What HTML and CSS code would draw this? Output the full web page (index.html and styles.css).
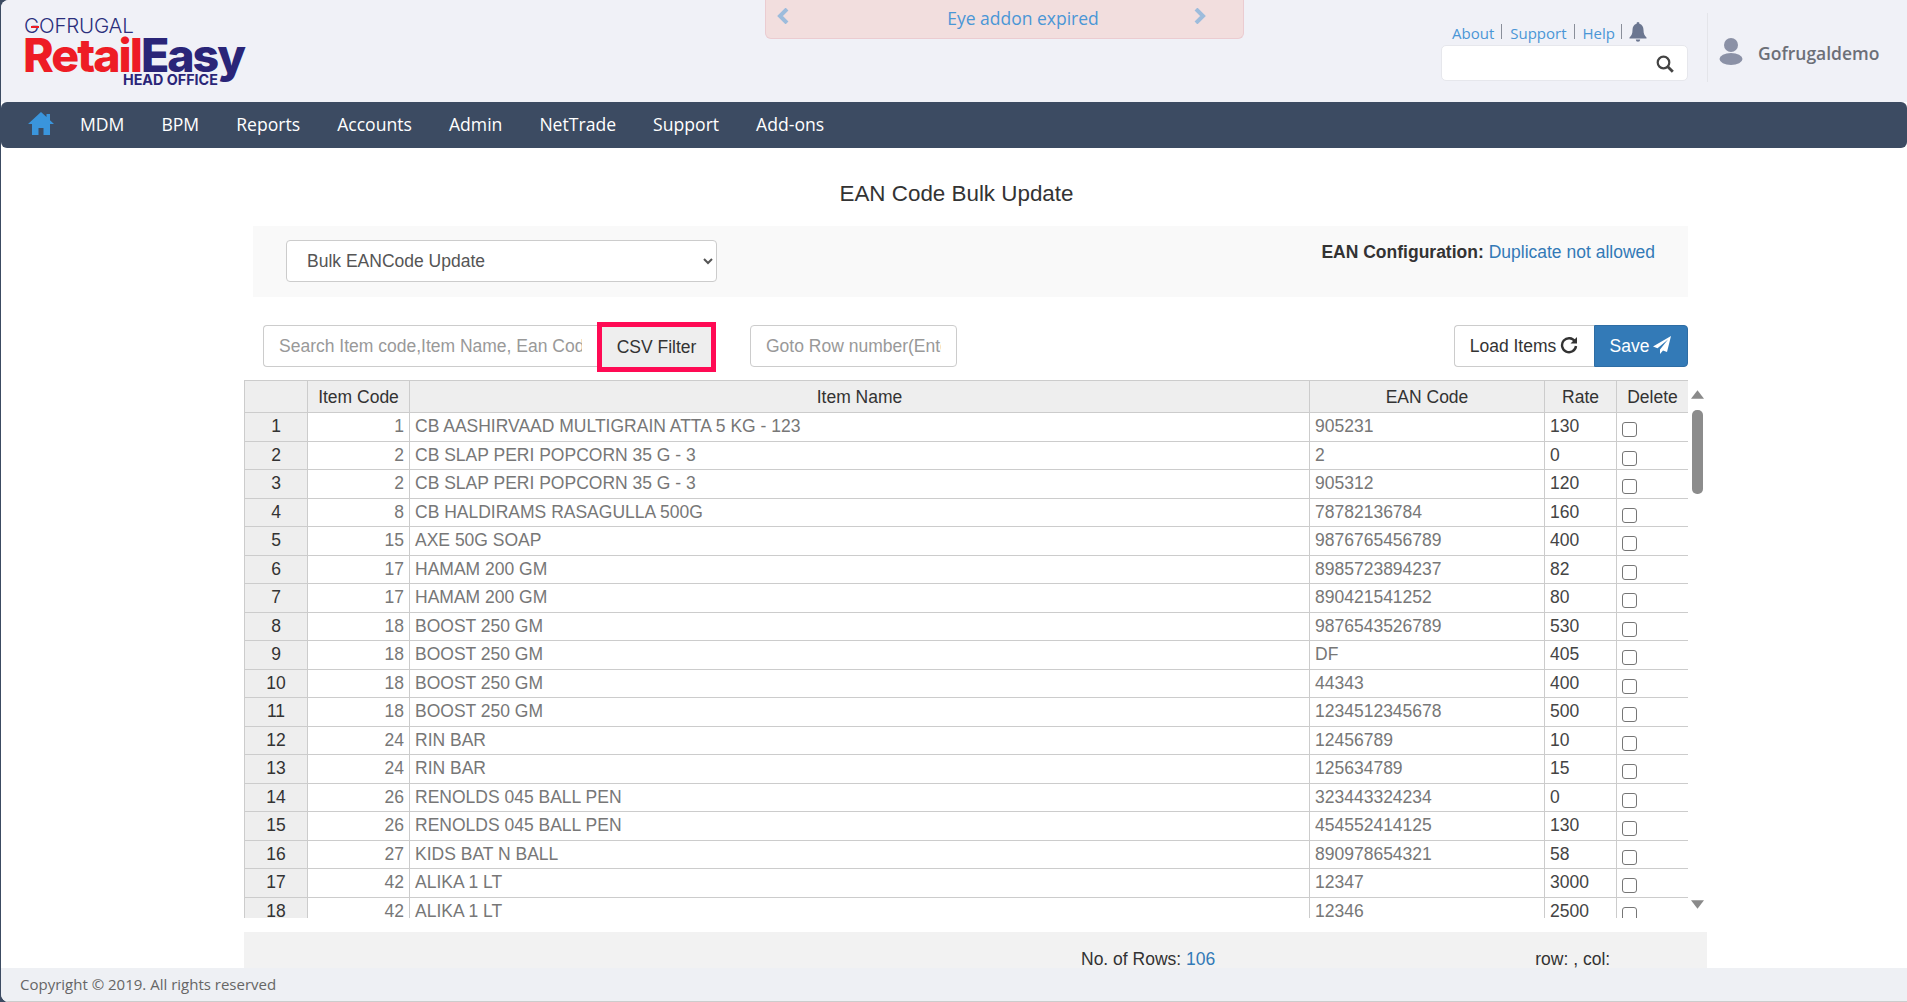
FILE: index.html
```html
<!DOCTYPE html>
<html lang="en">
<head>
<meta charset="utf-8">
<title>EAN Code Bulk Update</title>
<link rel="stylesheet" href="styles.css">
</head>
<body>
<div class="shell">
  <header class="top">
    <div class="logo">
      <div class="logo-brand">GOFRUGAL</div>
      <div class="logo-main"><span class="logo-red">Retail</span><span class="logo-navy">Easy</span></div>
      <div class="logo-sub">HEAD OFFICE</div>
    </div>
    <div class="alert">
      <svg class="alert-chev" viewBox="0 0 12 16"><path d="M10 1 3 8l7 7" fill="none" stroke="#9dbcdc" stroke-width="4"/></svg>
      <span class="alert-text">Eye addon expired</span>
      <svg class="alert-chev" viewBox="0 0 12 16"><path d="M2 1l7 7-7 7" fill="none" stroke="#9dbcdc" stroke-width="4"/></svg>
    </div>
    <div class="tools">
      <div class="tool-links">
        <a class="tool-link">About</a><a class="tool-link">Support</a><a class="tool-link">Help</a>
        <svg class="bell" viewBox="0 0 18 20"><path d="M9 0a1.5 1.5 0 0 1 1.4 1.8C13 2.500 14.500 4.800 14.500 8c0 4 1 5.500 3 7.500V16.500H.5V15.500c2-2 3-3.500 3-7.500 0-3.200 1.500-5.500 4.100-6.200A1.500 1.500 0 0 1 9 0ZM6.800 17.500h4.400a2.200 2.200 0 0 1-4.400 0Z" fill="#6b7690"/></svg>
      </div>
      <div class="top-search">
        <svg class="search-icon" viewBox="0 0 18 18"><circle cx="7.500" cy="7.500" r="5.800" fill="none" stroke="#444" stroke-width="2.200"/><path d="m11.800 11.800 5 5" stroke="#444" stroke-width="2.800"/></svg>
      </div>
    </div>
    <div class="user">
      <svg class="user-icon" viewBox="0 0 24 28"><circle cx="12" cy="8" r="7" fill="#8b91a6"/><ellipse cx="12" cy="22" rx="11.500" ry="6" fill="#8b91a6"/></svg>
      <span class="user-name">Gofrugaldemo</span>
    </div>
  </header>

  <nav class="nav">
    <svg class="home" viewBox="0 0 26 23"><path d="M13 0 0 12h4v11h6.500v-7h5v7H22V12h4l-4-3.700V2h-3.500v3.100Z" fill="#3a95dc"/></svg>
    <a class="nav-item">MDM</a>
    <a class="nav-item">BPM</a>
    <a class="nav-item">Reports</a>
    <a class="nav-item">Accounts</a>
    <a class="nav-item">Admin</a>
    <a class="nav-item">NetTrade</a>
    <a class="nav-item">Support</a>
    <a class="nav-item">Add-ons</a>
  </nav>

  <main class="main">
    <h1 class="title">EAN Code Bulk Update</h1>
    <section class="panel">
      <select class="mode"><option>Bulk EANCode Update</option></select>
      <p class="config"><b>EAN Configuration:</b> <span class="config-val">Duplicate not allowed</span></p>
    </section>
    <section class="toolbar">
      <input class="field field-search" placeholder="Search Item code,Item Name, Ean Code">
      <button class="csv">CSV Filter</button>
      <input class="field field-goto" placeholder="Goto Row number(Enter)">
      <div class="actions">
        <button class="btn btn-load">Load Items
          <svg class="btn-icon" viewBox="0 0 18 18"><path d="M15 5.500A7 7 0 1 0 16 10" fill="none" stroke="#333" stroke-width="2.400"/><path d="M17 1v6.500h-6.500Z" fill="#333"/></svg>
        </button>
        <button class="btn btn-save">Save
          <svg class="btn-icon" viewBox="0 0 18 18"><path d="M18 0 0 10.500l4.500 1.800L15 3.500 7 13.500V18l3-3.500 4 1.500Z" fill="#fff"/></svg>
        </button>
      </div>
    </section>
    <section class="grid-wrap">
      <div class="grid-view">
        <table class="grid">
          <colgroup><col class="c-no"><col class="c-code"><col class="c-name"><col class="c-ean"><col class="c-rate"><col class="c-del"></colgroup>
          <thead><tr><th></th><th>Item Code</th><th>Item Name</th><th>EAN Code</th><th>Rate</th><th>Delete</th></tr></thead>
          <tbody id="rows"></tbody>
        </table>
      </div>
      <div class="scroll">
        <svg class="scroll-arrow" viewBox="0 0 12 8"><path d="M6 0l6 8H0Z" fill="#8a8a8a"/></svg>
        <div class="scroll-thumb"></div>
        <svg class="scroll-arrow scroll-down" viewBox="0 0 12 8"><path d="M6 8 0 0h12Z" fill="#8a8a8a"/></svg>
      </div>
    </section>
    <section class="status">
      <span class="status-rows">No. of Rows: <span class="config-val">106</span></span>
      <span class="status-pos">row: , col:</span>
    </section>
  </main>

  <footer class="foot">Copyright © 2019. All rights reserved</footer>
</div>
<script src="app.js"></script>
</body>
</html>
```

FILE: app.js
```js
const data = [
  [1,"CB AASHIRVAAD MULTIGRAIN ATTA 5 KG - 123","905231",130],
  [2,"CB SLAP PERI POPCORN 35 G - 3","2",0],
  [2,"CB SLAP PERI POPCORN 35 G - 3","905312",120],
  [8,"CB HALDIRAMS RASAGULLA 500G","78782136784",160],
  [15,"AXE 50G SOAP","9876765456789",400],
  [17,"HAMAM 200 GM","8985723894237",82],
  [17,"HAMAM 200 GM","890421541252",80],
  [18,"BOOST 250 GM","9876543526789",530],
  [18,"BOOST 250 GM","DF",405],
  [18,"BOOST 250 GM","44343",400],
  [18,"BOOST 250 GM","1234512345678",500],
  [24,"RIN BAR","12456789",10],
  [24,"RIN BAR","125634789",15],
  [26,"RENOLDS 045 BALL PEN","323443324234",0],
  [26,"RENOLDS 045 BALL PEN","454552414125",130],
  [27,"KIDS BAT N BALL","890978654321",58],
  [42,"ALIKA 1 LT","12347",3000],
  [42,"ALIKA 1 LT","12346",2500]
];
const body = document.getElementById("rows");
data.forEach((r, i) => {
  const tr = document.createElement("tr");
  tr.innerHTML = `<td class="no">${i + 1}</td><td class="code">${r[0]}</td><td class="txt">${r[1]}</td><td class="txt">${r[2]}</td><td class="rate">${r[3]}</td><td class="del"><span class="check"></span></td>`;
  body.appendChild(tr);
});
```

FILE: styles.css
```css
* { box-sizing: border-box; }
html, body { margin: 0; height: 100%; overflow: hidden; }
body { background: #3c4b62; font-family: "Liberation Sans", Arial, sans-serif; color: #333; }
.shell {
  height: 1002px; margin-left: 1px; background: #fff; border-radius: 8px 0 0 8px;
  display: flex; flex-direction: column; overflow: hidden;
}

/* header */
.top { height: 102px; flex: none; background: #f0f1f7; display: flex; align-items: flex-start; padding-left: 23px; }
.logo { width: 741px; flex: none; padding-top: 16px; position: relative; }
.logo-brand { font: 300 20.5px/20px "Inter", sans-serif; letter-spacing: -0.2px; color: #2b2f7c; position: relative; }
.logo-brand::after { content: ""; position: absolute; left: 7px; top: 10px; width: 8px; height: 2px; background: #ee1c25; }
.logo-main { font: 800 46.5px/40px "Inter", sans-serif; letter-spacing: -2px; margin-top: -1px; margin-left: -1px; }
.logo-red { color: #ee1c25; }
.logo-navy { color: #2a2578; }
.logo-sub { font: 700 14.3px/14px "Inter", sans-serif; color: #2a2578; margin: -2px 0 0 99px; width: 96px; white-space: nowrap; }
.alert {
  width: 479px; height: 39px; flex: none; background: #f2dede; border: 1px solid #ebccd1; border-top: 0;
  border-radius: 0 0 6px 6px; display: flex; align-items: flex-start; justify-content: space-between; padding: 8px 37px 0 11px;
}
.alert-chev { width: 12px; height: 16px; }
.alert-text { font: 17.5px/20px "Open Sans", sans-serif; color: #4a96d6; margin: 0 0 0 63px; }
.tools { width: 247px; flex: none; margin-left: 197px; padding-top: 22px; }
.tool-links { display: flex; align-items: flex-start; height: 23px; padding-left: 11px; }
.tool-link { font: 15px/20px "Open Sans", sans-serif; color: #4a96d6; padding: 1px 8px 0 0; margin-right: 8px; height: 18px; position: relative; }
.tool-link::after { content: ""; position: absolute; right: 0; top: 2px; height: 15px; width: 1px; background: #8a8f9a; }
.tool-link:nth-child(3) { margin-right: 7px; padding-right: 7px; }
.bell { width: 18px; height: 20px; }
.top-search { height: 36px; background: #fff; border: 1px solid #e6e7ec; border-radius: 5px; display: flex; align-items: center; justify-content: flex-end; padding-right: 13px; }
.search-icon { width: 18px; height: 18px; margin-top: 2px; }
.user { margin-left: 19px; margin-top: 13px; height: 69px; border-left: 1px solid #e4e5ea; padding: 24px 0 0 11px; display: flex; align-items: flex-start; }
.user-icon { width: 24px; height: 28px; }
.user-name { font: 600 17.5px/24px "Open Sans", sans-serif; color: #6c6f78; margin-left: 15px; margin-top: 4px; }

/* nav */
.nav { height: 46px; flex: none; background: #3c4b62; border-radius: 6px; display: flex; align-items: center; padding-left: 27px; }
.home { width: 26px; height: 23px; margin-right: 26px; margin-top: -4px; }
.nav-item { font: 17.6px/24px "Open Sans", sans-serif; color: #fff; margin-right: 37px; margin-top: -3px; }

/* main */
.main { flex: 1; min-height: 0; padding: 0 200px 0 243px; overflow: hidden; }
.title { margin: 0; padding: 33px 38px 0 0; height: 78px; text-align: center; font: 400 22.4px/25px "Liberation Sans", sans-serif; color: #333; }
.panel { margin-left: 9px; margin-right: 19px; height: 71px; background: #f9f9f9; padding: 14px 33px; display: flex; justify-content: space-between; align-items: flex-start; }
.mode { width: 431px; height: 42px; font: 17.5px "Liberation Sans", sans-serif; color: #555; background: #fff; border: 1px solid #ccc; border-radius: 4px; padding: 0 16px; }
.config { margin: 0; font-size: 17.5px; line-height: 20px; color: #333; padding-top: 2px; }
.config-val { color: #337ab7; }
.toolbar { margin: 25px 19px 0 19px; height: 50px; display: flex; align-items: center; }
.field { height: 42px; border: 1px solid #ccc; border-radius: 4px 0 0 4px; font: 17.5px "Liberation Sans", sans-serif; padding: 0 15px; color: #555; background: #fff; margin-bottom: 2px; }
.field::placeholder { color: #999; opacity: 1; }
.field-search { width: 334px; border-right: 0; }
.csv { width: 119px; height: 50px; background: #eee; border: 5px solid #ff0a54; font: 17.5px "Liberation Sans", sans-serif; color: #333; padding: 0; }
.field-goto { width: 207px; margin-left: 34px; border-radius: 4px; }
.actions { margin-left: auto; display: flex; margin-bottom: 2px; }
.btn { height: 42px; font: 17.5px "Liberation Sans", sans-serif; display: flex; align-items: center; justify-content: center; gap: 4px; padding: 0 1px 0 0; }
.btn-load { width: 140px; background: #fff; border: 1px solid #ccc; border-right: 0; border-radius: 4px 0 0 4px; color: #333; }
.btn-save { width: 94px; background: #337ab7; border: 1px solid #2e6da4; border-radius: 0 4px 4px 0; color: #fff; }
.btn-icon { width: 18px; height: 18px; margin-top: -2px; }

.grid-wrap { margin-top: 8px; height: 538px; display: flex; }
.grid-view { width: 1444px; flex: none; height: 538px; overflow: hidden; }
.grid { width: 1444px; table-layout: fixed; border-collapse: collapse; font-size: 17.5px; }
.c-no { width: 63px; } .c-code { width: 102px; } .c-name { width: 900px; } .c-ean { width: 235px; } .c-rate { width: 72px; } .c-del { width: 72px; }
.grid th { height: 32px; background: #eee; border: 1px solid #ccc; font-weight: 400; padding: 1px 4px 0; color: #333; text-align: center; overflow: hidden; white-space: nowrap; }
.grid td { height: 28.5px; border: 1px solid #ccc; padding: 0 5px 1px; white-space: nowrap; overflow: hidden; line-height: 20px; }
.no { background: #eee; text-align: center; color: #333; }
.code { text-align: right; color: #777; }
.txt { color: #777; }
.rate { color: #444; }
.del { vertical-align: top; }
.grid td.del { padding: 0 4px; }
.check { display: block; width: 15px; height: 15px; border: 1px solid #767676; border-radius: 3px; margin: 9px 0 0 1px; background: #fff; }
.scroll { width: 18px; height: 538px; flex: none; display: flex; flex-direction: column; align-items: center; padding-top: 10px; }
.scroll-arrow { width: 13px; height: 9px; flex: none; }
.scroll-thumb { width: 11px; height: 84px; background: #8c8c8c; border-radius: 5px; margin-top: 11px; }
.scroll-down { margin-top: auto; margin-bottom: 9px; }
.status { margin-top: 14px; height: 37px; background: #f2f2f2; font-size: 17.5px; display: flex; padding: 16px 0 0 837px; line-height: 22px; }
.status-pos { margin-left: 320px; }

/* footer */
.foot { height: 34px; flex: none; background: #eef0f4; border-bottom: 1px solid #ccc; font: 15px/32px "Open Sans", sans-serif; color: #666; padding-left: 19px; }
```
